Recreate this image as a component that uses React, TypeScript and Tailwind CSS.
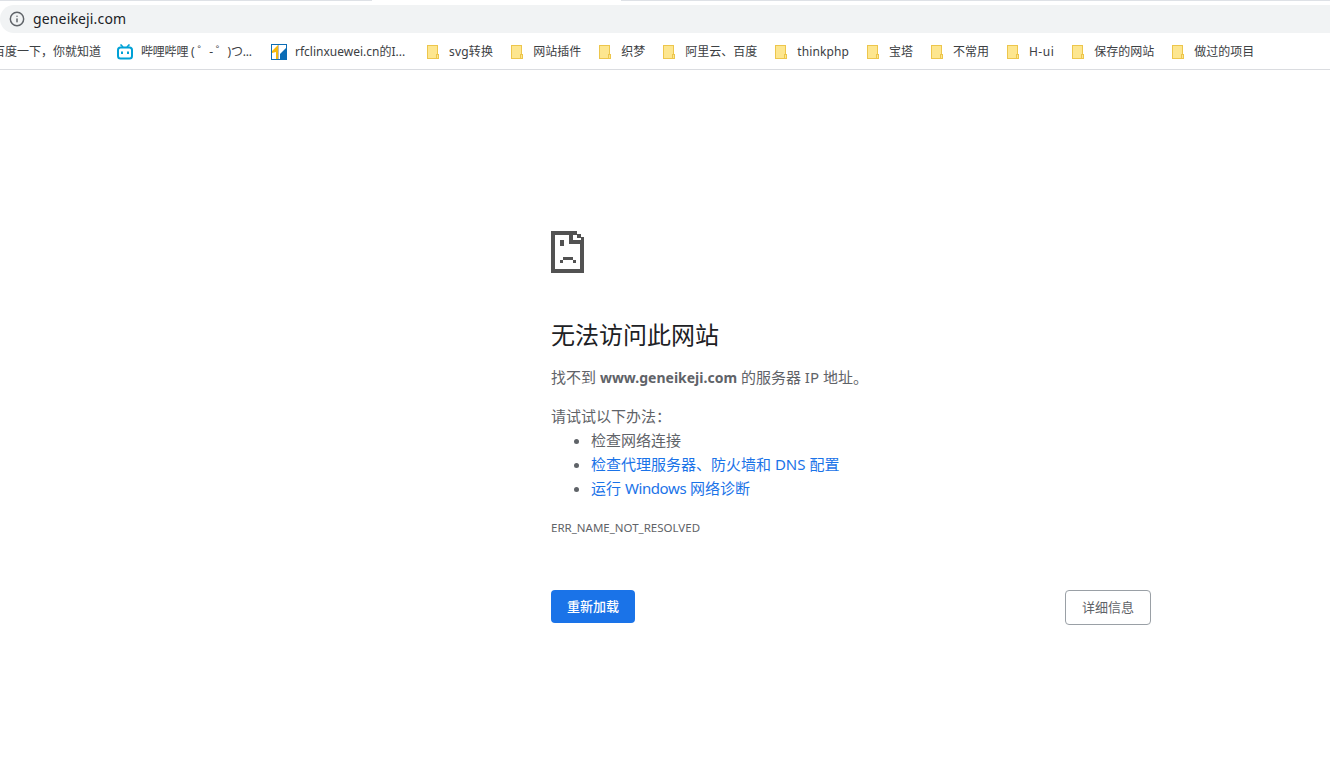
import { Info } from "lucide-react";

const font = "font-['Noto_Sans','Noto_Sans_CJK_SC',sans-serif]";

const Folder = () => (
  <svg width="12" height="14" viewBox="0 0 12 14" shapeRendering="crispEdges" className="shrink-0">
    <rect x="0.5" y="0.5" width="10" height="13" fill="#fde68f" stroke="#edc64c" />
    <rect x="9.5" y="9.5" width="2" height="4" fill="#fde68f" stroke="#edc64c" />
  </svg>
);

const Bili = () => (
  <svg width="16" height="16" viewBox="0 0 16 16" className="shrink-0">
    <path d="M3.5 0.5L6 3M12.5 0.5L10 3" stroke="#00a1d6" strokeWidth="1.6" />
    <rect x="1" y="3.5" width="14" height="11" rx="2.5" fill="none" stroke="#00a1d6" strokeWidth="2" />
    <rect x="4" y="7.5" width="2" height="2.5" fill="#00a1d6" />
    <rect x="10" y="7.5" width="2" height="2.5" fill="#00a1d6" />
  </svg>
);

const Rfc = () => (
  <svg width="16" height="16" viewBox="0 0 16 16" className="shrink-0">
    <rect x="0.5" y="0.5" width="15" height="15" fill="#fff" stroke="#0b6cb5" />
    <path d="M1 7L7 1V15H5V8L1 9Z" fill="#f5b90f" />
    <rect x="7" y="1" width="1" height="14" fill="#b8bcc0" />
    <path d="M9 10L15 4V15H9Z" fill="#0b6cb5" />
  </svg>
);

const SadTab = () => (
  <svg width="33" height="42" viewBox="0 0 33 42" shapeRendering="crispEdges" fill="#525252" className="block">
    <rect x="0" y="0" width="4" height="42" />
    <rect x="0" y="0" width="26" height="4" />
    <rect x="0" y="38" width="33" height="4" />
    <rect x="29" y="10" width="4" height="32" />
    <rect x="18" y="4" width="4" height="9" />
    <rect x="18" y="9" width="15" height="4" />
    <rect x="26" y="3" width="4" height="4" />
    <rect x="30" y="6" width="3" height="4" />
    <rect x="9" y="9" width="4" height="6" />
    <rect x="12" y="26" width="10" height="3" />
    <rect x="9" y="29" width="3" height="3" />
    <rect x="22" y="29" width="3" height="3" />
  </svg>
);

const bookmarks = [
  { label: "svg转换", cls: "tracking-[0.2px]" },
  { label: "网站插件", cls: "" },
  { label: "织梦", cls: "" },
  { label: "阿里云、百度", cls: "" },
  { label: "thinkphp", cls: "tracking-[0.1px]" },
  { label: "宝塔", cls: "" },
  { label: "不常用", cls: "" },
  { label: "H-ui", cls: "tracking-[0.5px]" },
  { label: "保存的网站", cls: "" },
  { label: "做过的项目", cls: "" },
];

export default function App() {
  return (
    <div className={`h-[775px] w-[1330px] overflow-hidden bg-white ${font}`}>
      <div className="flex h-[5px] items-start">
        <div className="h-[1px] w-[372px] bg-[#dee1e6]" />
        <div className="w-[249px]" />
        <div className="h-[1px] flex-1 bg-[#dee1e6]" />
      </div>
      <div className="flex h-[28px] items-center rounded-l-[14px] bg-[#f1f3f4] pb-[1px] pl-[9px]">
        <Info className="h-[16px] w-[16px] text-[#5f6368]" strokeWidth={2.2} />
        <span className="ml-[8px] text-[14px] tracking-[0.15px] text-[#202124]">geneikeji.com</span>
      </div>
      <div className="flex h-[37px] items-center gap-[18px] overflow-hidden whitespace-nowrap border-b border-[#dadce0] pt-[1px] text-[12px] text-[#3c4043]">
        <span className="ml-[-7px] w-[106px] shrink-0">百度一下，你就知道</span>
        <div className="flex w-[136px] shrink-0 items-center">
          <Bili />
          <span className="ml-[8px] tracking-[-0.2px]">哔哩哔哩 ( ゜- ゜)つ...</span>
        </div>
        <div className="flex w-[138px] shrink-0 items-center">
          <Rfc />
          <span className="ml-[8px]">rfclinxuewei.cn的I...</span>
        </div>
        {bookmarks.map((b) => (
          <div key={b.label} className="flex shrink-0 items-center">
            <Folder />
            <span className={`ml-[10px] ${b.cls}`}>{b.label}</span>
          </div>
        ))}
      </div>
      <main className="ml-[551px] w-[600px] pt-[161px]">
        <SadTab />
        <h1 className="mt-[44px] text-[24px] leading-[36px] font-normal text-[#202124]">无法访问此网站</h1>
        <p className="mt-[12px] text-[15px] leading-[24px] text-[#5f6368]">
          找不到 <strong className="text-[14px] font-bold">www.geneikeji.com</strong> 的服务器 IP 地址。
        </p>
        <p className="mt-[14px] text-[15px] leading-[24px] text-[#5f6368]">请试试以下办法：</p>
        <ul className="list-disc pl-[40px] text-[15px] leading-[24px] text-[#5f6368]">
          <li>检查网络连接</li>
          <li>
            <a className="text-[#1a73e8]">检查代理服务器、防火墙和 DNS 配置</a>
          </li>
          <li>
            <a className="text-[#1a73e8]">
              运行 <span className="tracking-[-0.4px]">Windows</span> 网络诊断
            </a>
          </li>
        </ul>
        <div className="mt-[19px] text-[11.5px] leading-[18px] text-[#5f6368]">ERR_NAME_NOT_RESOLVED</div>
        <div className="mt-[53px] flex items-start justify-between">
          <button className="h-[33px] w-[84px] rounded-[4px] bg-[#1a73e8] text-[13px] font-medium text-white">
            重新加载
          </button>
          <button className="h-[35px] w-[86px] rounded-[4px] border border-[#9aa0a6] bg-white text-[13px] text-[#5f6368]">
            详细信息
          </button>
        </div>
      </main>
    </div>
  );
}
